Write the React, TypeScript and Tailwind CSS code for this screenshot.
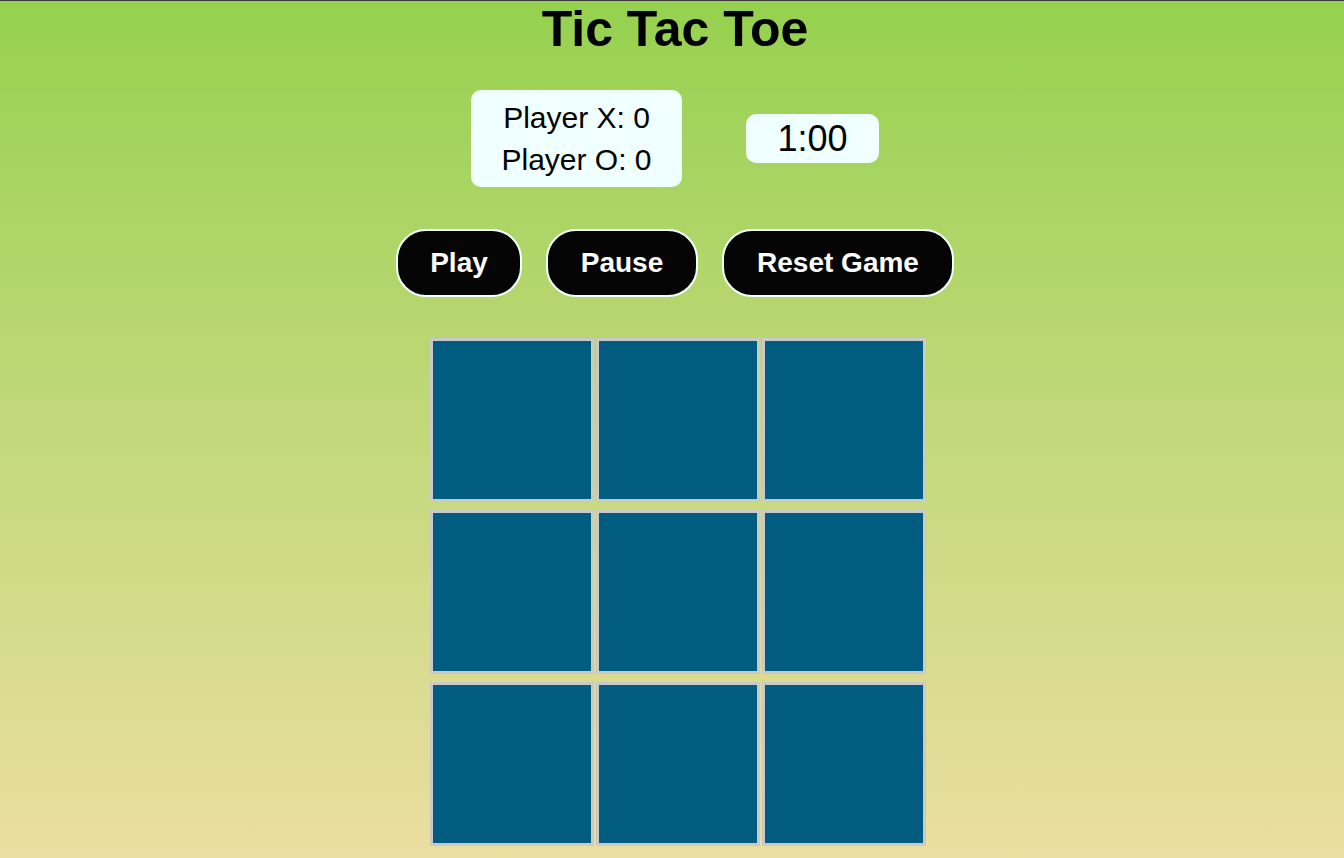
import { useState } from 'react'

const cells = Array.from({ length: 9 }, (_, i) => i)

const buttons = [
  { label: 'Play', width: 'w-[126px]' },
  { label: 'Pause', width: 'w-[152px]' },
  { label: 'Reset Game', width: 'w-[232px]' },
]

export default function App() {
  const [scoreX] = useState(0)
  const [scoreO] = useState(0)

  return (
    <div
      className="min-h-[858px] w-full border-t border-[#3b3b3b] bg-gradient-to-b from-[#95d14e] to-[#ebdea0] pl-[6px] text-black"
      style={{ fontFamily: '"Liberation Sans", Arial, sans-serif' }}
    >
      <h1 className="text-center text-[50px] font-bold leading-[56px]">
        Tic Tac Toe
      </h1>

      <div className="mt-[33px] flex items-center justify-center gap-[64px]">
        <div className="w-[211px] rounded-[10px] bg-[#f0ffff] py-[6.5px] text-center text-[30px] leading-[42px]">
          <p>Player X: {scoreX}</p>
          <p>Player O: {scoreO}</p>
        </div>
        <div className="w-[133px] rounded-[10px] bg-[#f0ffff] py-[4px] text-center text-[36px] leading-[41px]">
          1:00
        </div>
      </div>

      <div className="mt-[42px] flex justify-center gap-[24px]">
        {buttons.map((b) => (
          <button
            key={b.label}
            className={`h-[68px] ${b.width} rounded-[30px] border-2 border-[#f0ffff] bg-[#050505] text-center text-[28px] font-bold text-white`}
          >
            {b.label}
          </button>
        ))}
      </div>

      <div className="mt-[41px] flex justify-center pl-[6px]">
        <div className="grid grid-cols-[164px_164px_164px] gap-x-[2px] gap-y-[8px]">
          {cells.map((c) => (
            <div
              key={c}
              className="h-[164px] w-[164px] border-[3px] border-[#c9c9c9] bg-[#025c80]"
            />
          ))}
        </div>
      </div>
    </div>
  )
}
